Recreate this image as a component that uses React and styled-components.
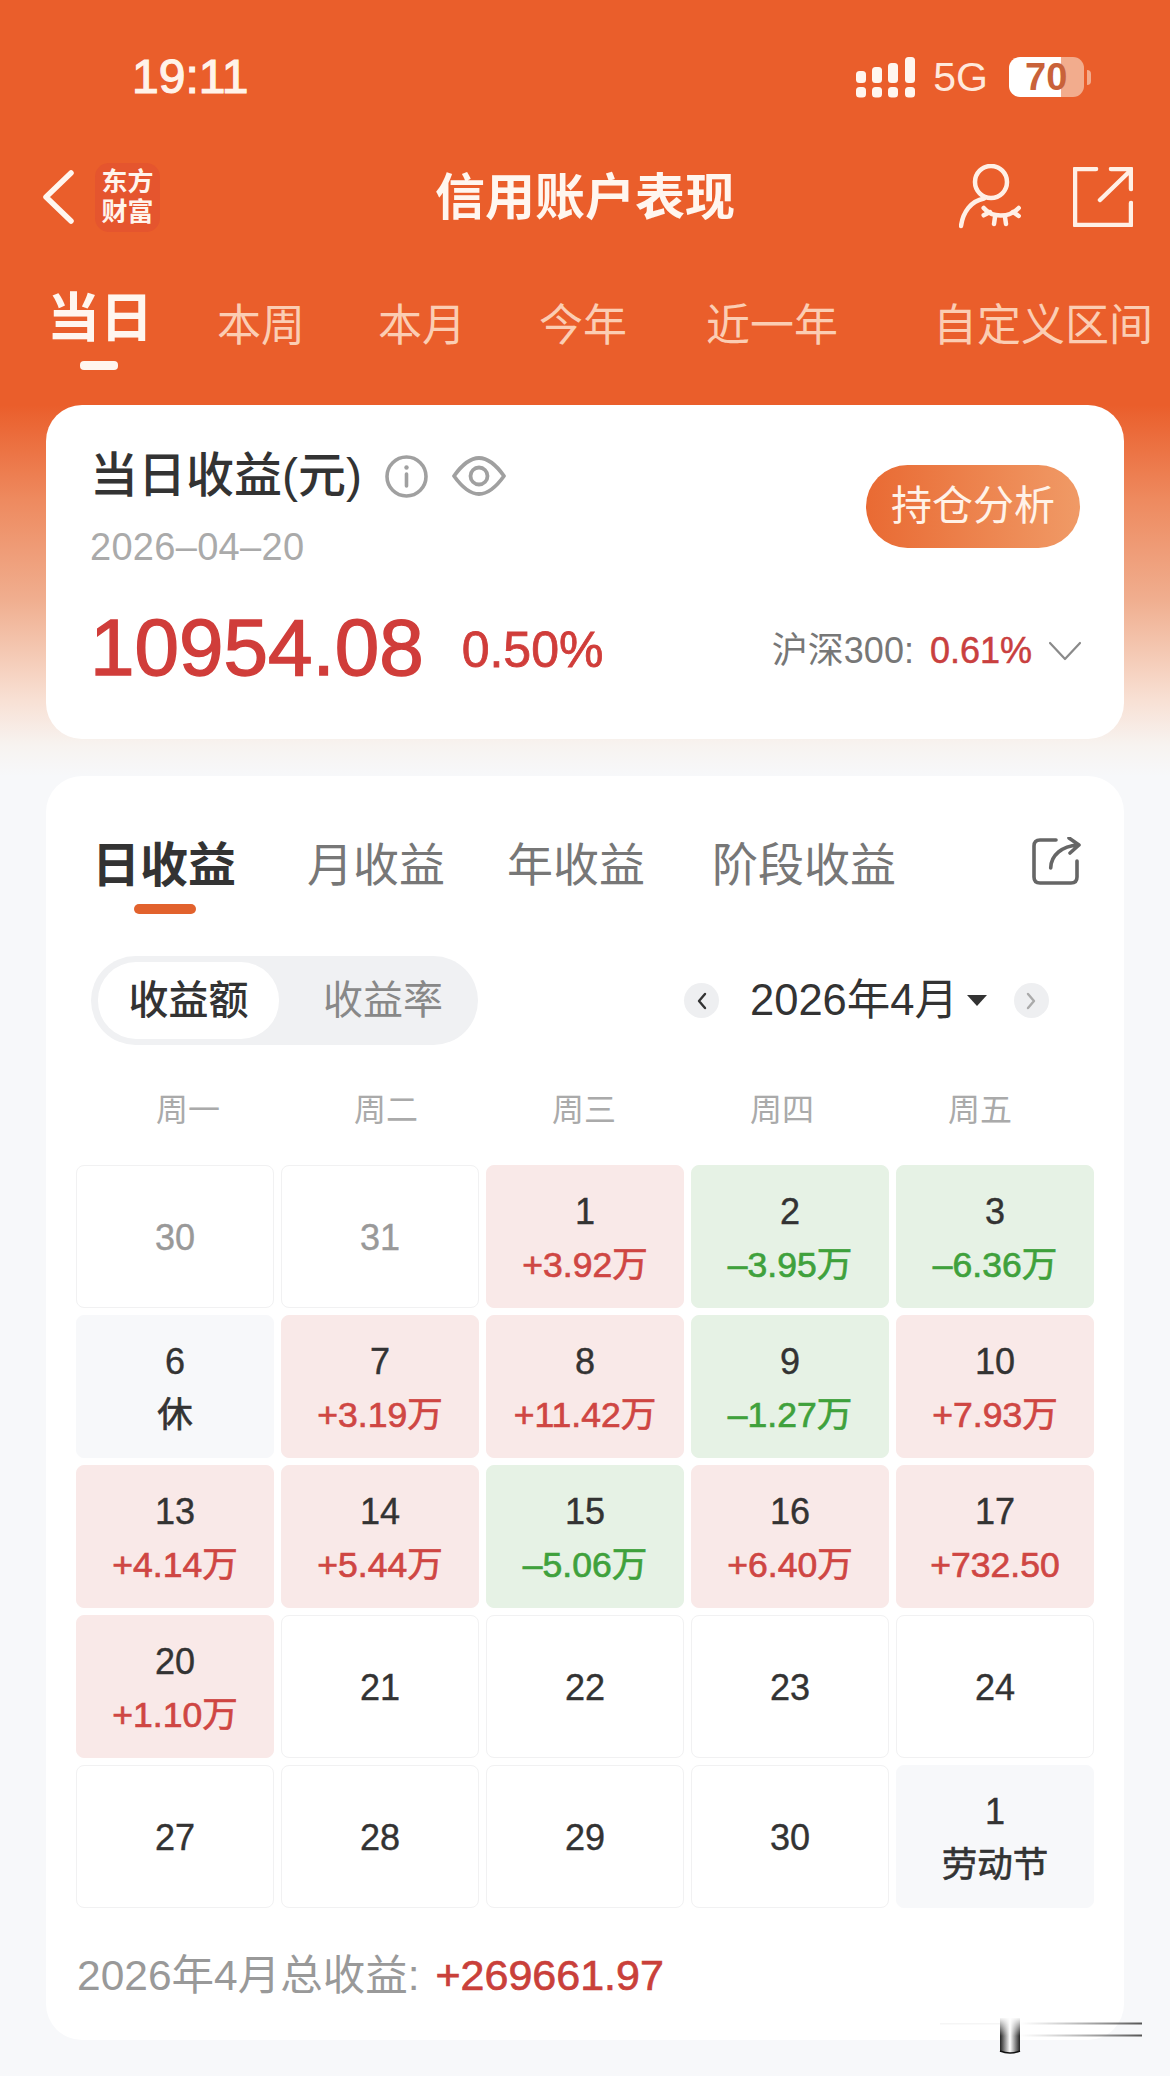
import React from 'react'
import styled, { createGlobalStyle } from 'styled-components'

const GlobalStyle = createGlobalStyle`
	html, body {
		margin: 0;
		padding: 0;
		background: #f7f8fa;
		font-family: 'Liberation Sans', 'Noto Sans CJK SC', sans-serif;
	}
`
const Page = styled.div`
	width: 1170px;
	height: 2076px;
	overflow: hidden;
	position: relative;
	background: linear-gradient(180deg, #ea5e2b 0, #ea5e2b 405px, #ee8a5f 500px, #f0ae8f 600px, #f8e0d4 700px, #f7f3f0 745px, #f7f8fa 776px);
`
const StatusBar = styled.div`
	height: 133px;
	padding: 57px 79px 0 132px;
	box-sizing: border-box;
	display: flex;
	justify-content: space-between;
	align-items: flex-start;
`
const Time = styled.span`
	font-size: 48px;
	line-height: 40px;
	font-weight: 400;
	color: #fff3ea;
	-webkit-text-stroke: 1.2px #fff3ea;
`
const StatusRight = styled.div`
	display: flex;
	align-items: center;
	height: 40px;
`
const Net = styled.span`
	font-size: 41px;
	color: #ffe9dc;
	margin: 0 21px 0 17px;
`
const Battery = styled.div`
	width: 75px;
	height: 40px;
	border-radius: 11px;
	background: linear-gradient(90deg, #fff 0, #fff 70%, #f2ac8d 70%);
	color: #c9623a;
	font-size: 38px;
	font-weight: 700;
	line-height: 40px;
	padding-left: 16px;
	box-sizing: border-box;
`
const BatteryNib = styled.div`
	width: 4px;
	height: 15px;
	margin-left: 3px;
	border-radius: 0 4px 4px 0;
	background: #f2ac8d;
`
const Header = styled.div`
	height: 120px;
	padding: 0 37px 0 42px;
	box-sizing: border-box;
	display: flex;
	align-items: center;
`
const HeaderSide = styled.div`
	flex: 1 1 0;
	display: flex;
	align-items: center;
	padding-top: 8px;
	justify-content: ${(props) => (props.end ? 'flex-end' : 'flex-start')};
	gap: ${(props) => (props.end ? '50px' : '21px')};
`
const Logo = styled.div`
	width: 65px;
	height: 69px;
	border-radius: 14px;
	background: #e5552e;
	color: #fff4ec;
	font-size: 26px;
	line-height: 30px;
	font-weight: 700;
	text-align: center;
	display: flex;
	flex-direction: column;
	justify-content: center;
`
const Title = styled.div`
	font-size: 50px;
	font-weight: 700;
	color: #fff6ef;
	margin-right: 5px;
`
const Periods = styled.div`
	display: flex;
	align-items: flex-start;
	padding-left: 47px;
	height: 90px;
	position: relative;
	margin-top: 36px;
	box-sizing: border-box;
`
const Period = styled.span`
	font-size: ${(props) => (props.active ? '53px' : '44px')};
	font-weight: ${(props) => (props.active ? 700 : 400)};
	color: ${(props) => (props.active ? '#fff6ef' : '#fbcdb3')};
	margin-left: ${(props) => props.gap || 0}px;
	margin-top: ${(props) => (props.active ? '-1px' : '6px')};
	white-space: nowrap;
	line-height: 62px;
`
const PeriodMark = styled.div`
	position: absolute;
	left: 80px;
	top: 72px;
	width: 38px;
	height: 9px;
	border-radius: 4px;
	background: #fff6ef;
`
const SummaryCard = styled.section`
	margin: 26px 46px 0;
	height: 334px;
	box-sizing: border-box;
	background: #fff;
	border-radius: 36px;
	padding: 46px 44px 0 44px;
	position: relative;
`
const SummaryTop = styled.div`
	display: flex;
	justify-content: space-between;
	align-items: flex-start;
`
const SummaryTitle = styled.div`
	display: flex;
	align-items: center;
	gap: 24px;
	font-size: 48px;
	line-height: 50px;
	font-weight: 500;
	color: #333;
`
const TitleIcons = styled.div`
	display: flex;
	align-items: center;
	gap: 24px;
	margin-left: -1px;
`
const DateText = styled.div`
	font-size: 38px;
	line-height: 40px;
	color: #aaa;
	margin-top: 26px;
	letter-spacing: 0.3px;
`
const AnalyzeButton = styled.div`
	width: 214px;
	height: 83px;
	border-radius: 42px;
	background: linear-gradient(90deg, #e96a33 0, #f09a66 100%);
	color: #fff2e8;
	font-size: 41px;
	text-align: center;
	line-height: 83px;
	margin-top: 14px;
`
const SummaryBottom = styled.div`
	display: flex;
	align-items: center;
	margin-top: 36px;
`
const BigValue = styled.span`
	font-size: 80px;
	font-weight: 400;
	line-height: 90px;
	color: #d03d3a;
	-webkit-text-stroke: 1.4px #d03d3a;
`
const Rate = styled.span`
	font-size: 50px;
	line-height: 60px;
	font-weight: 400;
	color: #d03d3a;
	-webkit-text-stroke: 0.8px #d03d3a;
	margin: 3px 0 0 38px;
`
const IndexBox = styled.div`
	margin: 6px -2px 0 auto;
	display: flex;
	align-items: center;
	font-size: 36px;
	line-height: 50px;
	color: #777;
`
const IndexRate = styled.span`
	color: #c9403f;
	font-weight: 400;
	-webkit-text-stroke: 0.5px #c9403f;
	margin: 0 16px 0 16px;
`
const MainCard = styled.section`
	margin: 37px 46px 0;
	height: 1264px;
	box-sizing: border-box;
	background: #fff;
	border-radius: 36px;
	padding-top: 55px;
`
const TabRow = styled.div`
	display: flex;
	align-items: center;
	height: 60px;
	padding: 0 42px 0 46px;
	position: relative;
`
const Tab = styled.span`
	font-size: ${(props) => (props.active ? '48px' : '46px')};
	font-weight: ${(props) => (props.active ? 700 : 400)};
	color: ${(props) => (props.active ? '#333' : '#777')};
	margin-left: ${(props) => props.gap || 0}px;
	white-space: nowrap;
`
const TabMark = styled.div`
	position: absolute;
	left: 88px;
	top: 73px;
	width: 62px;
	height: 10px;
	border-radius: 5px;
	background: #e2622d;
`
const ShareWrap = styled.div`
	margin-left: auto;
	display: flex;
`
const Controls = styled.div`
	display: flex;
	align-items: center;
	margin-top: 65px;
	padding-left: 45px;
	height: 89px;
`
const Toggle = styled.div`
	width: 387px;
	height: 89px;
	border-radius: 45px;
	background: #f0f1f3;
	padding: 6px 7px;
	box-sizing: border-box;
	display: flex;
`
const ToggleItem = styled.div`
	flex: none;
	width: ${(props) => (props.active ? '181px' : '208px')};
	height: 77px;
	border-radius: 38px;
	background: ${(props) => (props.active ? '#fff' : 'transparent')};
	color: ${(props) => (props.active ? '#333' : '#888')};
	font-size: 40px;
	font-weight: ${(props) => (props.active ? 500 : 400)};
	text-align: center;
	line-height: 77px;
`
const MonthPicker = styled.div`
	display: flex;
	align-items: center;
	margin-left: 206px;
`
const RoundButton = styled.div`
	width: 35px;
	height: 35px;
	border-radius: 50%;
	background: #eeeff1;
	display: flex;
	align-items: center;
	justify-content: center;
`
const MonthText = styled.span`
	font-size: 43.5px;
	line-height: 50px;
	color: #333;
	margin: 0 9px 1px 31px;
`
const Triangle = styled.div`
	width: 0;
	height: 0;
	border-left: 10px solid transparent;
	border-right: 10px solid transparent;
	border-top: 11px solid #333;
	margin-right: 27px;
`
const WeekRow = styled.div`
	display: grid;
	grid-template-columns: repeat(5, 198px);
	padding-left: 43px;
	margin-top: 43px;
	height: 44px;
`
const WeekDay = styled.div`
	font-size: 32px;
	line-height: 44px;
	color: #aaa;
	text-align: center;
`
const Calendar = styled.div`
	display: grid;
	grid-template-columns: repeat(5, 198px);
	grid-auto-rows: 143px;
	column-gap: 7px;
	row-gap: 7px;
	padding-left: 30px;
	margin-top: 33px;
`
const bg = { up: '#f9e9e8', down: '#e6f2e5', off: '#f7f8fa', none: '#fff', past: '#fff' }
const fg = { up: '#cf4643', down: '#3fa13c', off: '#333', none: '#333', past: '#999' }
const Cell = styled.div`
	border-radius: 8px;
	background: ${(props) => bg[props.kind]};
	border: 1px solid ${(props) => (props.kind === 'none' || props.kind === 'past' ? '#f1f1f2' : bg[props.kind])};
	box-sizing: border-box;
	padding-top: 3px;
	display: flex;
	flex-direction: column;
	align-items: center;
	justify-content: center;
	gap: 11px;
	color: ${(props) => (props.kind === 'past' ? '#999' : '#333')};
`
const CellDay = styled.div`
	font-size: 36px;
	line-height: 42px;
	font-weight: 400;
	-webkit-text-stroke: 0.4px currentColor;
`
const CellValue = styled.div`
	font-size: 35.5px;
	line-height: 42px;
	color: ${(props) => fg[props.kind]};
	-webkit-text-stroke: 0.7px currentColor;
	white-space: nowrap;
`
const TotalRow = styled.div`
	margin-top: 41px;
	padding-left: 31px;
	font-size: 42.5px;
	line-height: 52px;
	color: #999;
`
const TotalValue = styled.span`
	color: #c9403a;
	font-size: 43px;
	-webkit-text-stroke: 0.7px #c9403a;
	margin-left: 16px;
`
const Watermark = styled.svg`
	position: absolute;
	left: 920px;
	top: 2010px;
`

const BackIcon = () => (
	<svg width="32" height="54" viewBox="0 0 32 54" fill="none">
		<path d="M29 3 L4 27 L29 51" stroke="#fff6ef" strokeWidth="5.5" strokeLinecap="round" strokeLinejoin="round" />
	</svg>
)
const SignalIcon = () => (
	<svg width="60" height="41" viewBox="0 0 60 41" fill="#fff6ef">
		<rect x="0" y="14" width="10" height="12" rx="3.5" />
		<rect x="16" y="10" width="10" height="16" rx="3.5" />
		<rect x="32" y="6" width="10" height="20" rx="3.5" />
		<rect x="49" y="0" width="10" height="26" rx="3.5" />
		<rect x="0" y="30" width="10" height="10.5" rx="3.5" />
		<rect x="16" y="30" width="10" height="10.5" rx="3.5" />
		<rect x="32" y="30" width="10" height="10.5" rx="3.5" />
		<rect x="49" y="30" width="10" height="10.5" rx="3.5" />
	</svg>
)
const UserEyeIcon = () => (
	<svg width="64" height="66" viewBox="0 0 64 66" fill="none" stroke="#fff0e6" strokeWidth="4.5" strokeLinecap="round">
		<circle cx="32" cy="18" r="16" />
		<path d="M25 34.5 C12 37 4 48 2 62" />
		<path d="M24.7 44 C33 54 50 54 59.7 44" />
		<path d="M24.7 51.3 L31 48 M35 60 L36 53 M47 60 L46 53 M59.7 52 L54 48" />
	</svg>
)
const ExportIcon = () => (
	<svg width="60" height="60" viewBox="0 0 60 60" fill="none" stroke="#fff0e6" strokeWidth="4.5" strokeLinecap="round" strokeLinejoin="round">
		<path d="M23 2 H2 V58 H58 V36" />
		<path d="M27 33 L58 3 M38 2 H58 V22" />
	</svg>
)
const InfoIcon = () => (
	<svg width="43" height="43" viewBox="0 0 43 43" fill="none" stroke="#a0a0a0" strokeWidth="3.6">
		<circle cx="21.5" cy="21.5" r="19.5" />
		<path d="M21.5 19 V31" strokeLinecap="round" />
		<circle cx="21.5" cy="12.5" r="2.2" fill="#a0a0a0" stroke="none" />
	</svg>
)
const EyeIcon = () => (
	<svg width="54" height="40" viewBox="0 0 54 40" fill="none" stroke="#a0a0a0" strokeWidth="3.8" strokeLinejoin="round">
		<path d="M2 20 C12 6 20 2 27 2 C34 2 42 6 52 20 C42 34 34 38 27 38 C20 38 12 34 2 20 Z" />
		<circle cx="27" cy="20" r="8.5" />
	</svg>
)
const ChevronDown = () => (
	<svg width="34" height="20" viewBox="0 0 34 20" fill="none" stroke="#8a8a8a" strokeWidth="2.2" strokeLinecap="round" strokeLinejoin="round">
		<path d="M2 2 L17 18 L32 2" />
	</svg>
)
const ShareIcon = () => (
	<svg width="50" height="48" viewBox="0 0 50 48" fill="none" stroke="#666" strokeWidth="3.6" strokeLinecap="round" strokeLinejoin="round">
		<path d="M24 3 H8 Q2 3 2 9 V40 Q2 46 8 46 H39 Q45 46 45 40 V24" />
		<path d="M18.7 31 C19 18 30 9 46 8 M37 1 L47 8 L38 16" />
	</svg>
)
const SmallChevron = ({ dir, color }) => (
	<svg width="12" height="18" viewBox="0 0 12 18" fill="none" stroke={color} strokeWidth="2.4" strokeLinecap="round" strokeLinejoin="round">
		<path d={dir === 'left' ? 'M9 2 L3 9 L9 16' : 'M3 2 L9 9 L3 16'} />
	</svg>
)

const periods = [
	{ label: '本周', gap: 64 },
	{ label: '本月', gap: 73 },
	{ label: '今年', gap: 73 },
	{ label: '近一年', gap: 79 },
	{ label: '自定义区间', gap: 95 },
]
const weekDays = ['周一', '周二', '周三', '周四', '周五']
const days = [
	{ day: '30', kind: 'past' },
	{ day: '31', kind: 'past' },
	{ day: '1', kind: 'up', value: '+3.92万' },
	{ day: '2', kind: 'down', value: '–3.95万' },
	{ day: '3', kind: 'down', value: '–6.36万' },
	{ day: '6', kind: 'off', value: '休' },
	{ day: '7', kind: 'up', value: '+3.19万' },
	{ day: '8', kind: 'up', value: '+11.42万' },
	{ day: '9', kind: 'down', value: '–1.27万' },
	{ day: '10', kind: 'up', value: '+7.93万' },
	{ day: '13', kind: 'up', value: '+4.14万' },
	{ day: '14', kind: 'up', value: '+5.44万' },
	{ day: '15', kind: 'down', value: '–5.06万' },
	{ day: '16', kind: 'up', value: '+6.40万' },
	{ day: '17', kind: 'up', value: '+732.50' },
	{ day: '20', kind: 'up', value: '+1.10万' },
	{ day: '21', kind: 'none' },
	{ day: '22', kind: 'none' },
	{ day: '23', kind: 'none' },
	{ day: '24', kind: 'none' },
	{ day: '27', kind: 'none' },
	{ day: '28', kind: 'none' },
	{ day: '29', kind: 'none' },
	{ day: '30', kind: 'none' },
	{ day: '1', kind: 'off', value: '劳动节' },
]

const App = () => (
	<Page>
		<GlobalStyle />
		<StatusBar>
			<Time>19:11</Time>
			<StatusRight>
				<SignalIcon />
				<Net>5G</Net>
				<Battery>70</Battery>
				<BatteryNib />
			</StatusRight>
		</StatusBar>
		<Header>
			<HeaderSide>
				<BackIcon />
				<Logo>
					<span>东方</span>
					<span>财富</span>
				</Logo>
			</HeaderSide>
			<Title>信用账户表现</Title>
			<HeaderSide end="true">
				<UserEyeIcon />
				<ExportIcon />
			</HeaderSide>
		</Header>
		<Periods>
			<Period active>当日</Period>
			{periods.map((p) => (
				<Period key={p.label} gap={p.gap}>
					{p.label}
				</Period>
			))}
			<PeriodMark />
		</Periods>
		<SummaryCard>
			<SummaryTop>
				<div>
					<SummaryTitle>
						<span>当日收益(元)</span>
						<TitleIcons>
							<InfoIcon />
							<EyeIcon />
						</TitleIcons>
					</SummaryTitle>
					<DateText>2026–04–20</DateText>
				</div>
				<AnalyzeButton>持仓分析</AnalyzeButton>
			</SummaryTop>
			<SummaryBottom>
				<BigValue>10954.08</BigValue>
				<Rate>0.50%</Rate>
				<IndexBox>
					沪深300:
					<IndexRate>0.61%</IndexRate>
					<ChevronDown />
				</IndexBox>
			</SummaryBottom>
		</SummaryCard>
		<MainCard>
			<TabRow>
				<Tab active>日收益</Tab>
				<Tab gap={71}>月收益</Tab>
				<Tab gap={62}>年收益</Tab>
				<Tab gap={67}>阶段收益</Tab>
				<ShareWrap>
					<ShareIcon />
				</ShareWrap>
				<TabMark />
			</TabRow>
			<Controls>
				<Toggle>
					<ToggleItem active>收益额</ToggleItem>
					<ToggleItem>收益率</ToggleItem>
				</Toggle>
				<MonthPicker>
					<RoundButton>
						<SmallChevron dir="left" color="#333" />
					</RoundButton>
					<MonthText>2026年4月</MonthText>
					<Triangle />
					<RoundButton>
						<SmallChevron dir="right" color="#aaa" />
					</RoundButton>
				</MonthPicker>
			</Controls>
			<WeekRow>
				{weekDays.map((d) => (
					<WeekDay key={d}>{d}</WeekDay>
				))}
			</WeekRow>
			<Calendar>
				{days.map((d, i) => (
					<Cell key={i} kind={d.kind}>
						<CellDay>{d.day}</CellDay>
						{d.value && <CellValue kind={d.kind}>{d.value}</CellValue>}
					</Cell>
				))}
			</Calendar>
			<TotalRow>
				2026年4月总收益:
				<TotalValue>+269661.97</TotalValue>
			</TotalRow>
		</MainCard>
		<Watermark width="230" height="50" viewBox="0 0 230 50" fill="none">
			<defs>
				<linearGradient id="wmBar" x1="0" x2="1" y1="0" y2="0">
					<stop offset="0" stopColor="#222" />
					<stop offset="0.5" stopColor="#fff" />
					<stop offset="1" stopColor="#222" />
				</linearGradient>
				<linearGradient id="wmFade" x1="0" x2="0" y1="0" y2="1">
					<stop offset="0" stopColor="#fff" stopOpacity="0.95" />
					<stop offset="1" stopColor="#fff" stopOpacity="0" />
				</linearGradient>
				<linearGradient id="wmLine" x1="0" x2="1" y1="0" y2="0">
					<stop offset="0" stopColor="#888" stopOpacity="0" />
					<stop offset="1" stopColor="#555" />
				</linearGradient>
			</defs>
			<rect x="100" y="12.5" width="122" height="2" fill="url(#wmLine)" />
			<rect x="100" y="24.5" width="122" height="2" fill="url(#wmLine)" />
			<rect x="20" y="13" width="60" height="1.5" fill="#eee" opacity="0.6" />
			<rect x="80" y="8" width="20" height="34" fill="url(#wmBar)" />
			<rect x="80" y="8" width="20" height="18" fill="url(#wmFade)" />
			<path d="M80 41 Q90 45 100 41" stroke="#111" strokeWidth="1.6" />
		</Watermark>
	</Page>
)

export default App
